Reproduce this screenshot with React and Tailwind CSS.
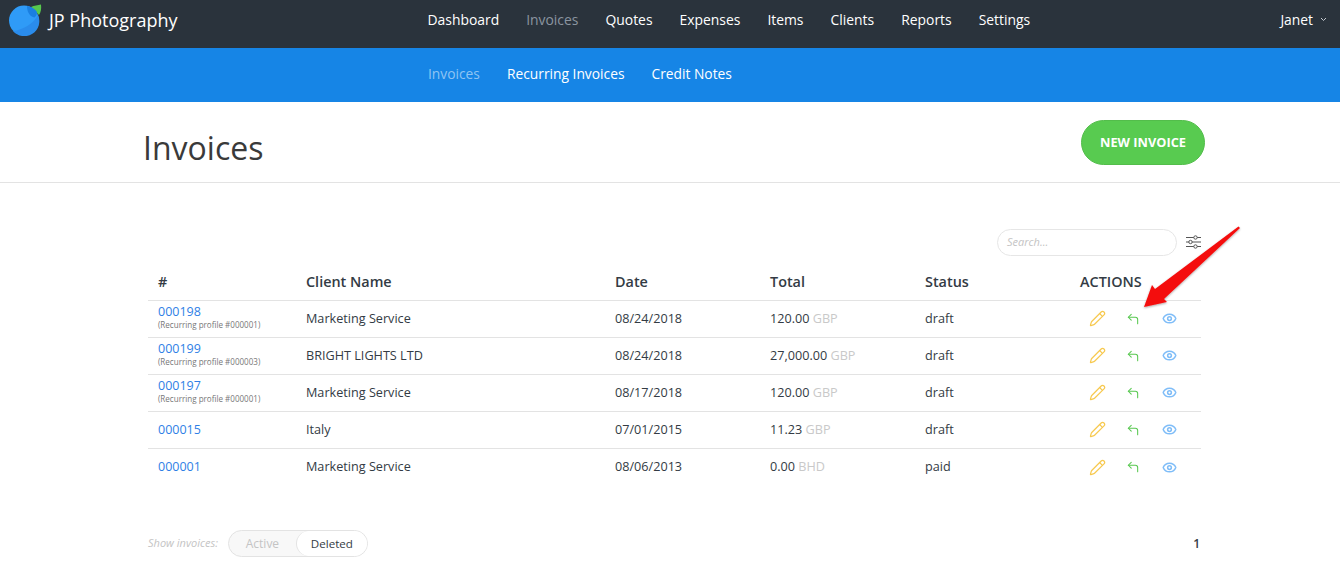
import { CornerUpLeft, Eye, Pencil } from 'lucide-react'

const nav = ['Dashboard', 'Invoices', 'Quotes', 'Expenses', 'Items', 'Clients', 'Reports', 'Settings']

const rows = [
  { id: '000198', sub: '(Recurring profile #000001)', client: 'Marketing Service', date: '08/24/2018', total: '120.00', cur: 'GBP', status: 'draft' },
  { id: '000199', sub: '(Recurring profile #000003)', client: 'BRIGHT LIGHTS LTD', date: '08/24/2018', total: '27,000.00', cur: 'GBP', status: 'draft' },
  { id: '000197', sub: '(Recurring profile #000001)', client: 'Marketing Service', date: '08/17/2018', total: '120.00', cur: 'GBP', status: 'draft' },
  { id: '000015', client: 'Italy', date: '07/01/2015', total: '11.23', cur: 'GBP', status: 'draft' },
  { id: '000001', client: 'Marketing Service', date: '08/06/2013', total: '0.00', cur: 'BHD', status: 'paid' },
]

const cols = 'grid grid-cols-[158px_309px_155px_155px_155px_121px]'

function Logo() {
  return (
    <svg width="34" height="32" viewBox="0 0 34 32" className="shrink-0">
      <path d="M22 3C25 1.500 29 1 32 .5c.5 4 0 7.500-2 10.500z" fill="#57c84d" />
      <circle cx="15" cy="16.500" r="15" fill="#2f9bf7" />
      <path d="M4 27C14 26 24 20 29 11A15 15 0 0 1 4 27z" fill="#2a8cec" />
      <path d="M18 2C22 2.500 26 5 28 8c0 2.500-1 4.500-2.500 5.500C21 13 18 8 18 2z" fill="#1a7fe0" />
    </svg>
  )
}

function Arrow() {
  return (
    <svg width="110" height="95" viewBox="0 0 110 95" className="absolute left-[1135px] top-[220px]">
      <defs>
        <filter id="shadow" x="-20%" y="-20%" width="140%" height="140%">
          <feDropShadow dx="0" dy="1" stdDeviation="1" floodColor="#000" floodOpacity="0.35" />
        </filter>
      </defs>
      <path d="M103.500 6.500 20 69 17 65 9 87 32 82 29 79 105 8z" fill="#f40d0d" filter="url(#shadow)" />
    </svg>
  )
}

export default function App() {
  return (
    <div className="relative h-[583px] overflow-hidden bg-white font-['Open_Sans',sans-serif] text-[12.65px] text-[#333b44]">
      <header className="flex h-12 items-center bg-[#2a333c] pb-2 pl-[9px] pr-[13px] text-white">
        <Logo />
        <span className="ml-[6px] text-lg leading-none">JP Photography</span>
        <nav className="ml-[250px] flex gap-[27px] text-[13.9px]">
          {nav.map(item => (
            <a key={item} className={item === 'Invoices' ? 'text-[#8b95a0]' : ''}>{item}</a>
          ))}
        </nav>
        <div className="ml-auto flex items-center gap-[7px] text-[13.85px]">
          Janet
          <svg width="7" height="5" viewBox="0 0 7 5" fill="none" stroke="#c4cad0"><path d="m1 1 2.500 2.500L6 1" /></svg>
        </div>
      </header>

      <div className="flex h-[54px] items-center gap-[27px] bg-[#1685e6] pb-[2px] pl-[428px] text-[13.8px] text-white">
        <a className="text-[#8fc4f3]">Invoices</a>
        <a>Recurring Invoices</a>
        <a>Credit Notes</a>
      </div>

      <div className="flex h-[81px] items-center justify-between border-b border-[#e3e3e3] pl-[143px] pr-[135px]">
        <h1 className="pt-3 text-[32px] leading-none text-[#3a3a3a]">Invoices</h1>
        <button className="mt-[1px] h-[45px] w-[124px] rounded-full border border-[#53bd4b] bg-[#58cb50] text-[12.8px] font-bold text-white">NEW INVOICE</button>
      </div>

      <main className="pl-[148px] pr-[139px]">
        <div className="flex h-[73px] items-end justify-end gap-[9px]">
          <div className="flex h-[27px] w-[180px] items-center rounded-full border border-[#e6e6e6] pl-[9px] text-[11px] italic text-[#c4c4c4]">Search...</div>
          <svg width="15" height="14" viewBox="0 0 15 14" fill="none" stroke="#555" className="mb-[7px]">
            <path d="M0 2.500h15M0 7h15M0 11.500h15" />
            <circle cx="9.500" cy="2.500" r="1.700" fill="#fff" />
            <circle cx="4.500" cy="7" r="1.700" fill="#fff" />
            <circle cx="9.500" cy="11.500" r="1.700" fill="#fff" />
          </svg>
        </div>

        <div className={`${cols} h-[45px] items-end border-b border-[#e3e3e3] pb-[7px] text-[14.4px] font-semibold text-[#333b44]`}>
          <div className="pl-[10px]">#</div>
          <div>Client Name</div>
          <div>Date</div>
          <div>Total</div>
          <div>Status</div>
          <div>ACTIONS</div>
        </div>

        {rows.map((row, i) => (
          <div key={row.id} className={`${cols} h-[37px] items-center pb-[2px] ${i < rows.length - 1 ? 'border-b border-[#e3e3e3]' : ''}`}>
            <div className={row.sub ? 'pb-[3px] pl-[10px]' : 'pl-[10px]'}>
              <div className="text-[12.5px] leading-[15px] text-[#2f7fe6]">{row.id}</div>
              {row.sub && <div className="text-[8.05px] leading-[11px] text-[#777]">{row.sub}</div>}
            </div>
            <div>{row.client}</div>
            <div>{row.date}</div>
            <div>{row.total} <span className="text-[#c9c9c9]">{row.cur}</span></div>
            <div>{row.status}</div>
            <div className="flex items-center pl-[9px] pt-[1px]">
              <Pencil size={17} strokeWidth={1.7} className="text-[#f7c94f]" />
              <CornerUpLeft size={14} strokeWidth={1.8} className="ml-[20px] text-[#58c850]" />
              <Eye size={15} strokeWidth={2.4} className="ml-[22px] text-[#7fbdf8]" />
            </div>
          </div>
        ))}

        <div className="mt-[44px] flex items-center justify-between">
          <div className="flex items-center gap-[10px]">
            <span className="text-[11px] italic text-[#c4c4c4]">Show invoices:</span>
            <div className="flex h-[27px] w-[140px] rounded-full border border-[#e3e3e3] bg-[#f8f8f8] text-[11.6px]">
              <span className="flex w-[67px] items-center justify-center text-[12px] text-[#c4c4c4]">Active</span>
              <span className="flex flex-1 items-center justify-center rounded-full border-l border-[#e3e3e3] bg-white text-[#333b44]">Deleted</span>
            </div>
          </div>
          <span className="mr-[1px] text-xs font-semibold">1</span>
        </div>
      </main>

      <Arrow />
    </div>
  )
}
